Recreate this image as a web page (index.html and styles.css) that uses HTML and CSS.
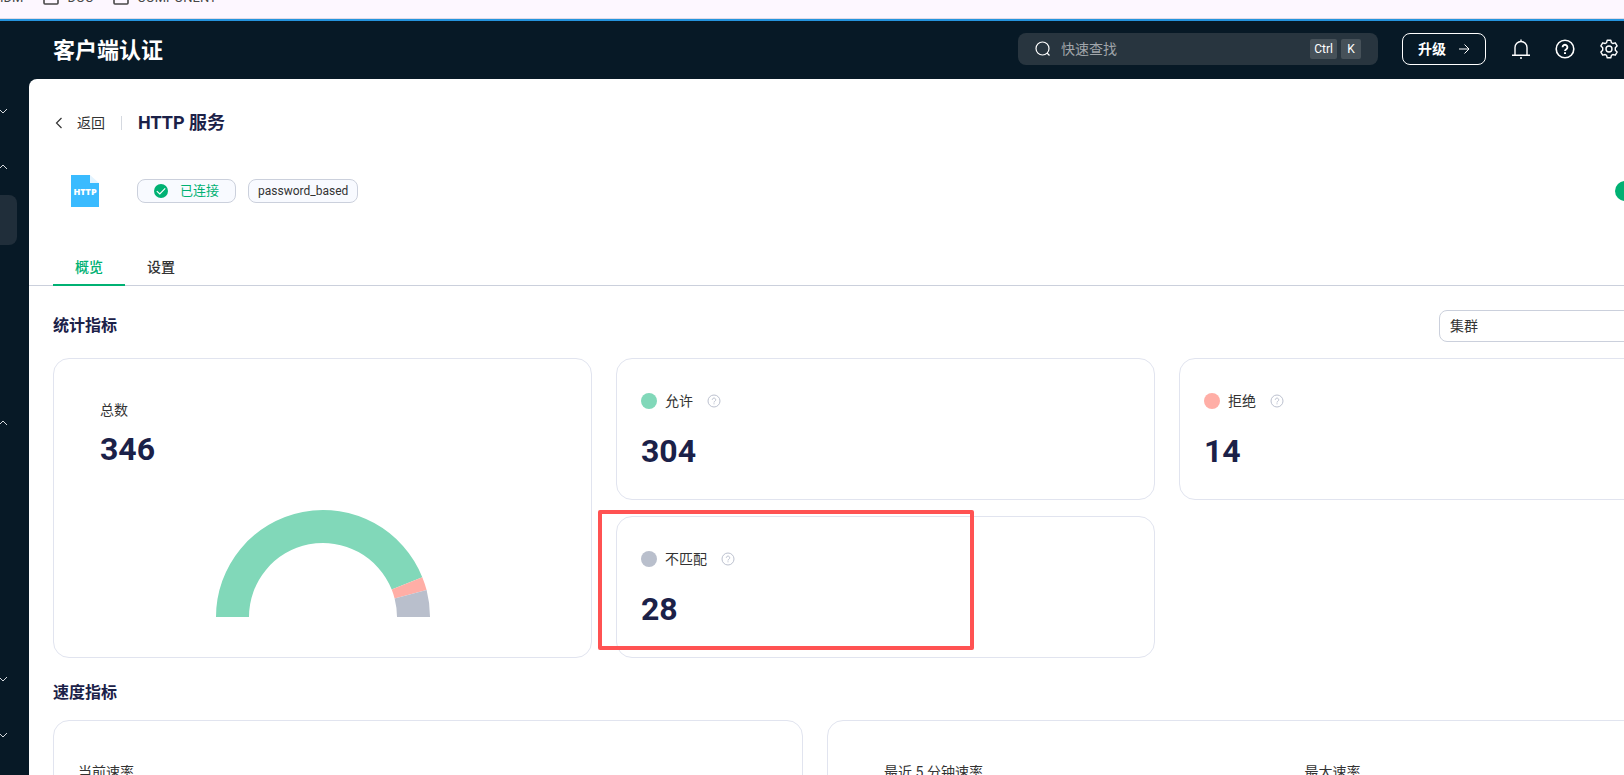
FILE: index.html
```html
<!DOCTYPE html>
<html lang="zh-CN">
<head>
  <meta charset="UTF-8">
  <title>客户端认证</title>
  <link rel="stylesheet" href="styles.css">
</head>
<body>
  <div class="bookmarks">
    <span class="bookmark">IDM</span>
    <span class="bookmark">
      <svg width="16" height="14" viewBox="0 0 16 14" fill="none" stroke="#474747" stroke-width="1.6"><path d="M1 2.5V12a1 1 0 0 0 1 1h12a1 1 0 0 0 1-1V4a1 1 0 0 0-1-1H8L6.500 1H2a1 1 0 0 0-1 1z"/></svg>
      DOC
    </span>
    <span class="bookmark">
      <svg width="16" height="14" viewBox="0 0 16 14" fill="none" stroke="#474747" stroke-width="1.6"><path d="M1 2.500V12a1 1 0 0 0 1 1h12a1 1 0 0 0 1-1V4a1 1 0 0 0-1-1H8L6.500 1H2a1 1 0 0 0-1 1z"/></svg>
      COMPONENT
    </span>
  </div>

  <div class="app">
    <nav class="sidebar">
      <ul>
        <li class="group"><svg class="chevron" viewBox="0 0 12 12"><path d="M2 4l4 4 4-4"/></svg></li>
        <li class="group"><svg class="chevron" viewBox="0 0 12 12"><path d="M2 8l4-4 4 4"/></svg></li>
        <li class="item active"></li>
        <li class="item"></li>
        <li class="item"></li>
        <li class="item"></li>
        <li class="group"><svg class="chevron" viewBox="0 0 12 12"><path d="M2 8l4-4 4 4"/></svg></li>
        <li class="item"></li>
        <li class="item"></li>
        <li class="item"></li>
        <li class="item"></li>
        <li class="group"><svg class="chevron" viewBox="0 0 12 12"><path d="M2 4l4 4 4-4"/></svg></li>
        <li class="group"><svg class="chevron" viewBox="0 0 12 12"><path d="M2 4l4 4 4-4"/></svg></li>
      </ul>
    </nav>

    <div class="page">
      <header class="topbar">
        <h1>客户端认证</h1>
        <label class="search">
          <svg width="16" height="16" viewBox="0 0 16 16" fill="none" stroke="#fff" stroke-width="1.2"><circle cx="7.500" cy="7.500" r="6.500"/><path d="M12 12l2.500 2.500"/></svg>
          <input type="text" placeholder="快速查找" aria-label="快速查找">
          <kbd>Ctrl</kbd>
          <kbd>K</kbd>
        </label>
        <button class="upgrade" type="button">
          升级
          <svg width="12" height="12" viewBox="0 0 12 12" fill="none" stroke="#fff" stroke-width="1"><path d="M1 6h10M6.500 1.500L11 6l-4.500 4.500"/></svg>
        </button>
        <div class="tools">
          <button type="button" aria-label="通知">
            <svg width="20" height="20" viewBox="0 0 20 20" fill="none" stroke="#fff" stroke-width="1.4"><path d="M4 16V8.500a6 6 0 0 1 12 0V16M1 16.200h18M10 .6v2M9 19h2"/></svg>
          </button>
          <button type="button" aria-label="帮助">
            <svg width="20" height="20" viewBox="0 0 20 20" fill="none" stroke="#fff" stroke-width="1.6"><circle cx="10" cy="10" r="8.800"/><path d="M7.600 8.200a2.400 2.400 0 1 1 3.700 2c-.9.600-1.300 1-1.300 1.900" stroke-width="1.900"/><path d="M10 13.200v1.700" stroke-width="2"/></svg>
          </button>
          <button type="button" aria-label="设置">
            <svg width="20" height="20" viewBox="0 0 20 20" fill="none" stroke="#fff" stroke-width="1.4" stroke-linejoin="round"><path d="M8.200 1.200h3.600l.6 2.500 1.400.8 2.500-.7 1.800 3.100-1.800 1.800v2.600l1.800 1.800-1.800 3.100-2.500-.7-1.400.8-.6 2.500H8.200l-.6-2.500-1.400-.8-2.500.7-1.800-3.100 1.800-1.800V8.700L1.900 6.900l1.800-3.100 2.500.7 1.400-.8z"/><circle cx="10" cy="10" r="3"/></svg>
          </button>
        </div>
      </header>

      <main class="content">
        <div class="back-row">
          <a class="back" href="#">
            <svg width="12" height="12" viewBox="0 0 12 12" fill="none" stroke="#333" stroke-width="1.2"><path d="M8.500 1L3.500 6l5 5"/></svg>
            返回
          </a>
          <h2>HTTP 服务</h2>
        </div>

        <div class="info-row">
          <svg class="logo" width="32" height="32" viewBox="0 0 32 32">
            <path d="M2 0h19v8h9v24H2z" fill="#3abbff"/>
            <path d="M21 0l9 8h-9z" fill="#e3f4ff"/>
            <text x="16" y="20" text-anchor="middle">HTTP</text>
          </svg>
          <span class="tag status">
            <svg width="14" height="14" viewBox="0 0 14 14"><circle cx="7" cy="7" r="7" fill="#00b173"/><path d="M2.800 7.200l3 2.800 5.400-5.600" fill="none" stroke="#fff" stroke-width="1.100"/></svg>
            已连接
          </span>
          <span class="tag">password_based</span>
          <input class="switch" type="checkbox" role="switch" aria-label="启用" checked>
        </div>

        <div class="tabs" role="tablist">
          <button class="tab active" type="button" role="tab">概览</button>
          <button class="tab" type="button" role="tab">设置</button>
        </div>

        <section class="metrics">
          <div class="section-head">
            <h3>统计指标</h3>
            <select aria-label="范围">
              <option>集群</option>
            </select>
          </div>

          <div class="stats">
            <div class="card total">
              <p class="label">总数</p>
              <p class="value">346</p>
              <svg class="gauge" width="214" height="107" viewBox="-107 -107 214 107">
                <path fill="#81d8b9" d="M-107 0A107 107 0 0 1 99.300 -39.800L68.700 -27.500A74 74 0 0 0 -74 0z"/>
                <path fill="#ffaea6" d="M99.300 -39.800A107 107 0 0 1 103.600 -26.900L71.600 -18.600A74 74 0 0 0 68.700 -27.500z"/>
                <path fill="#b9bfcc" d="M103.600 -26.900A107 107 0 0 1 107 0H74A74 74 0 0 0 71.600 -18.600z"/>
              </svg>
            </div>
            <div class="card">
              <p class="label"><i class="dot allow"></i>允许
                <svg class="help" viewBox="0 0 14 14"><circle cx="7" cy="7" r="6"/><path d="M5.300 5.800a1.700 1.700 0 1 1 2.600 1.400c-.6.400-.9.700-.9 1.300M7 9.300v1"/></svg>
              </p>
              <p class="value">304</p>
            </div>
            <div class="card">
              <p class="label"><i class="dot deny"></i>拒绝
                <svg class="help" viewBox="0 0 14 14"><circle cx="7" cy="7" r="6"/><path d="M5.300 5.800a1.700 1.700 0 1 1 2.600 1.400c-.6.400-.9.700-.9 1.300M7 9.300v1"/></svg>
              </p>
              <p class="value">14</p>
            </div>
            <div class="card marked">
              <p class="label"><i class="dot ignore"></i>不匹配
                <svg class="help" viewBox="0 0 14 14"><circle cx="7" cy="7" r="6"/><path d="M5.300 5.800a1.700 1.700 0 1 1 2.600 1.400c-.6.400-.9.700-.9 1.300M7 9.300v1"/></svg>
              </p>
              <p class="value">28</p>
              <div class="highlight"></div>
            </div>
          </div>

          <div class="section-head speed-head">
            <h3>速度指标</h3>
          </div>

          <div class="speeds">
            <div class="card speed">
              <p class="label">当前速率</p>
            </div>
            <div class="card speed pair">
              <p class="label">最近 5 分钟速率</p>
              <p class="label">最大速率</p>
            </div>
          </div>
        </section>
      </main>
    </div>
  </div>
</body>
</html>
```

FILE: styles.css
```css
* {
  box-sizing: border-box;
}

body {
  margin: 0;
  height: 100vh;
  display: flex;
  flex-direction: column;
  overflow: hidden;
  font-family: Roboto, "Noto Sans CJK SC", sans-serif;
  font-size: 14px;
  line-height: 20px;
  color: #333;
  background: #071926;
}

h1, h2, h3, p, ul {
  margin: 0;
  padding: 0;
}

button, input, select {
  font: inherit;
}

/* bookmarks strip */
.bookmarks {
  flex: none;
  height: 19px;
  display: flex;
  align-items: flex-end;
  gap: 20px;
  padding-bottom: 12px;
  overflow: hidden;
  background: #fdf7ff;
  border-bottom: 1px solid #e0dbe6;
  font-size: 13px;
  line-height: 16px;
  color: #474747;
}

.bookmark {
  display: flex;
  align-items: center;
  gap: 8px;
}

.app {
  flex: 1;
  min-height: 0;
  display: flex;
  border-top: 2px solid #2594de;
}

/* sidebar */
.sidebar {
  flex: none;
  width: 29px;
  padding-top: 62px;
  overflow: hidden;
}

.sidebar ul {
  list-style: none;
}

.group {
  height: 56px;
  display: flex;
  align-items: center;
  justify-content: flex-end;
  padding-right: 20px;
}

.chevron {
  flex: none;
  width: 12px;
  height: 12px;
  fill: none;
  stroke: #d5d9dd;
  stroke-width: 1;
}

.item {
  height: 50px;
  margin-right: 12px;
  border-radius: 0 8px 8px 0;
}

.item.active {
  background: #202e3a;
}

/* top bar */
.page {
  flex: 1;
  min-width: 0;
  display: flex;
  flex-direction: column;
}

.topbar {
  flex: none;
  height: 58px;
  display: flex;
  align-items: center;
  padding: 0 5px 2px 24px;
}

.topbar h1 {
  flex: 1;
  padding-top: 4px;
  font-size: 22px;
  line-height: 32px;
  font-weight: 700;
  color: #fff;
}

.search {
  width: 360px;
  height: 32px;
  display: flex;
  align-items: center;
  gap: 4px;
  padding: 0 17px;
  border-radius: 8px;
  background: #28353f;
}

.search input {
  flex: 1;
  min-width: 0;
  padding: 0 6px;
  border: none;
  outline: none;
  background: none;
  color: #fff;
}

.search input::placeholder {
  color: #a0a5aa;
}

.search kbd {
  min-width: 20px;
  padding: 0 4px;
  border-radius: 2px;
  background: #465159;
  font-family: inherit;
  font-size: 12px;
  text-align: center;
  color: #fff;
}

.upgrade {
  width: 84px;
  height: 32px;
  display: flex;
  align-items: center;
  justify-content: center;
  gap: 12px;
  margin-left: 24px;
  padding: 0;
  border: 1px solid #fff;
  border-radius: 8px;
  background: none;
  font-weight: 700;
  color: #fff;
}

.tools {
  display: flex;
  gap: 24px;
  margin-left: 25px;
}

.tools button {
  width: 20px;
  height: 20px;
  padding: 0;
  border: none;
  background: none;
}

.tools svg {
  display: block;
}

/* content runs past the right edge of the window */
.content {
  flex: 1;
  width: calc(100% + 118px);
  min-height: 0;
  padding-top: 30px;
  overflow: hidden;
  border-radius: 8px 0 0 0;
  background: #fff;
}

.back-row {
  display: flex;
  align-items: center;
  padding: 0 24px;
}

.back {
  display: flex;
  align-items: center;
  gap: 12px;
  padding-right: 16px;
  color: #333;
  text-decoration: none;
}

.back-row h2 {
  position: relative;
  padding-left: 17px;
  font-size: 18px;
  line-height: 28px;
  font-weight: 700;
  color: #1b2148;
}

.back-row h2::before {
  content: "";
  position: absolute;
  left: 0;
  top: 7px;
  height: 14px;
  border-left: 1px solid #d5d9e0;
}

.info-row {
  display: flex;
  align-items: center;
  gap: 12px;
  height: 32px;
  margin-top: 38px;
  padding: 0 24px 0 40px;
}

.logo {
  margin-right: 24px;
}

.logo text {
  font-family: "Open Sans", sans-serif;
  font-size: 9px;
  font-weight: 800;
  fill: #fff;
}

.tag {
  height: 24px;
  display: flex;
  align-items: center;
  padding: 0 9px;
  border: 1px solid #cbd0dc;
  border-radius: 8px;
  background: #f8faff;
  font-size: 12px;
}

.tag.status {
  gap: 12px;
  padding: 0 16px;
  font-size: 13px;
  color: #00b173;
}

.switch {
  appearance: none;
  width: 40px;
  height: 20px;
  margin: 0 63px 0 auto;
  border-radius: 10px;
  background: #00b173;
}

.tabs {
  display: flex;
  margin-top: 39px;
  padding: 0 24px;
  border-bottom: 1px solid #cbd0dc;
}

.tab {
  height: 40px;
  width: 72px;
  margin-bottom: -1px;
  padding: 4px 0 0;
  border: none;
  border-bottom: 2px solid transparent;
  background: none;
  font-weight: 500;
  color: #333;
}

.tab.active {
  border-color: #00b173;
  color: #00b173;
}

/* metrics */
.metrics {
  padding: 24px;
}

.section-head {
  display: flex;
  align-items: center;
  justify-content: space-between;
  margin-bottom: 16px;
}

.section-head h3 {
  font-size: 16px;
  line-height: 24px;
  font-weight: 700;
  color: #1b2148;
}

.section-head select {
  appearance: none;
  width: 279px;
  height: 32px;
  padding: 0 10px;
  border: 1px solid #cbd0dc;
  border-radius: 8px;
  background: #fff;
  color: #333;
}

.stats {
  display: grid;
  grid-template-columns: repeat(3, 1fr);
  grid-auto-rows: 142px;
  gap: 16px 24px;
}

.card {
  padding: 32px 24px;
  border: 1px solid #e1e4ef;
  border-radius: 16px;
}

.label {
  display: flex;
  align-items: center;
}

.value {
  margin-top: 20px;
  font-size: 32px;
  line-height: 40px;
  font-weight: 700;
  color: #1b2148;
}

.total {
  grid-row: span 2;
  padding: 41px 46px;
}

.total .value {
  margin-top: 9px;
}

.gauge {
  display: block;
  margin: 41px auto 0;
}

.dot {
  width: 16px;
  height: 16px;
  margin-right: 8px;
  border-radius: 50%;
}

.allow { background: #81d8b9; }
.deny { background: #ffaea6; }
.ignore { background: #b9bfcc; }

.help {
  width: 14px;
  height: 14px;
  margin-left: 14px;
  fill: none;
  stroke: #bcc1cf;
  stroke-width: 1;
}

.marked {
  position: relative;
  grid-column: 2;
}

.highlight {
  position: absolute;
  left: -19px;
  top: -7px;
  width: 376px;
  height: 140px;
  border: 4px solid #ff5252;
  border-radius: 2px;
}

.speed-head {
  margin: 23px 0 15px;
}

.speeds {
  display: grid;
  grid-template-columns: calc((100% + 24px) * 11 / 24 - 24px) 1fr;
  gap: 24px;
}

.speed {
  height: 160px;
  padding-top: 41px;
}

.pair {
  display: grid;
  grid-template-columns: 1fr 1fr;
  align-items: start;
}

.pair .label {
  padding-left: 32px;
}
```
